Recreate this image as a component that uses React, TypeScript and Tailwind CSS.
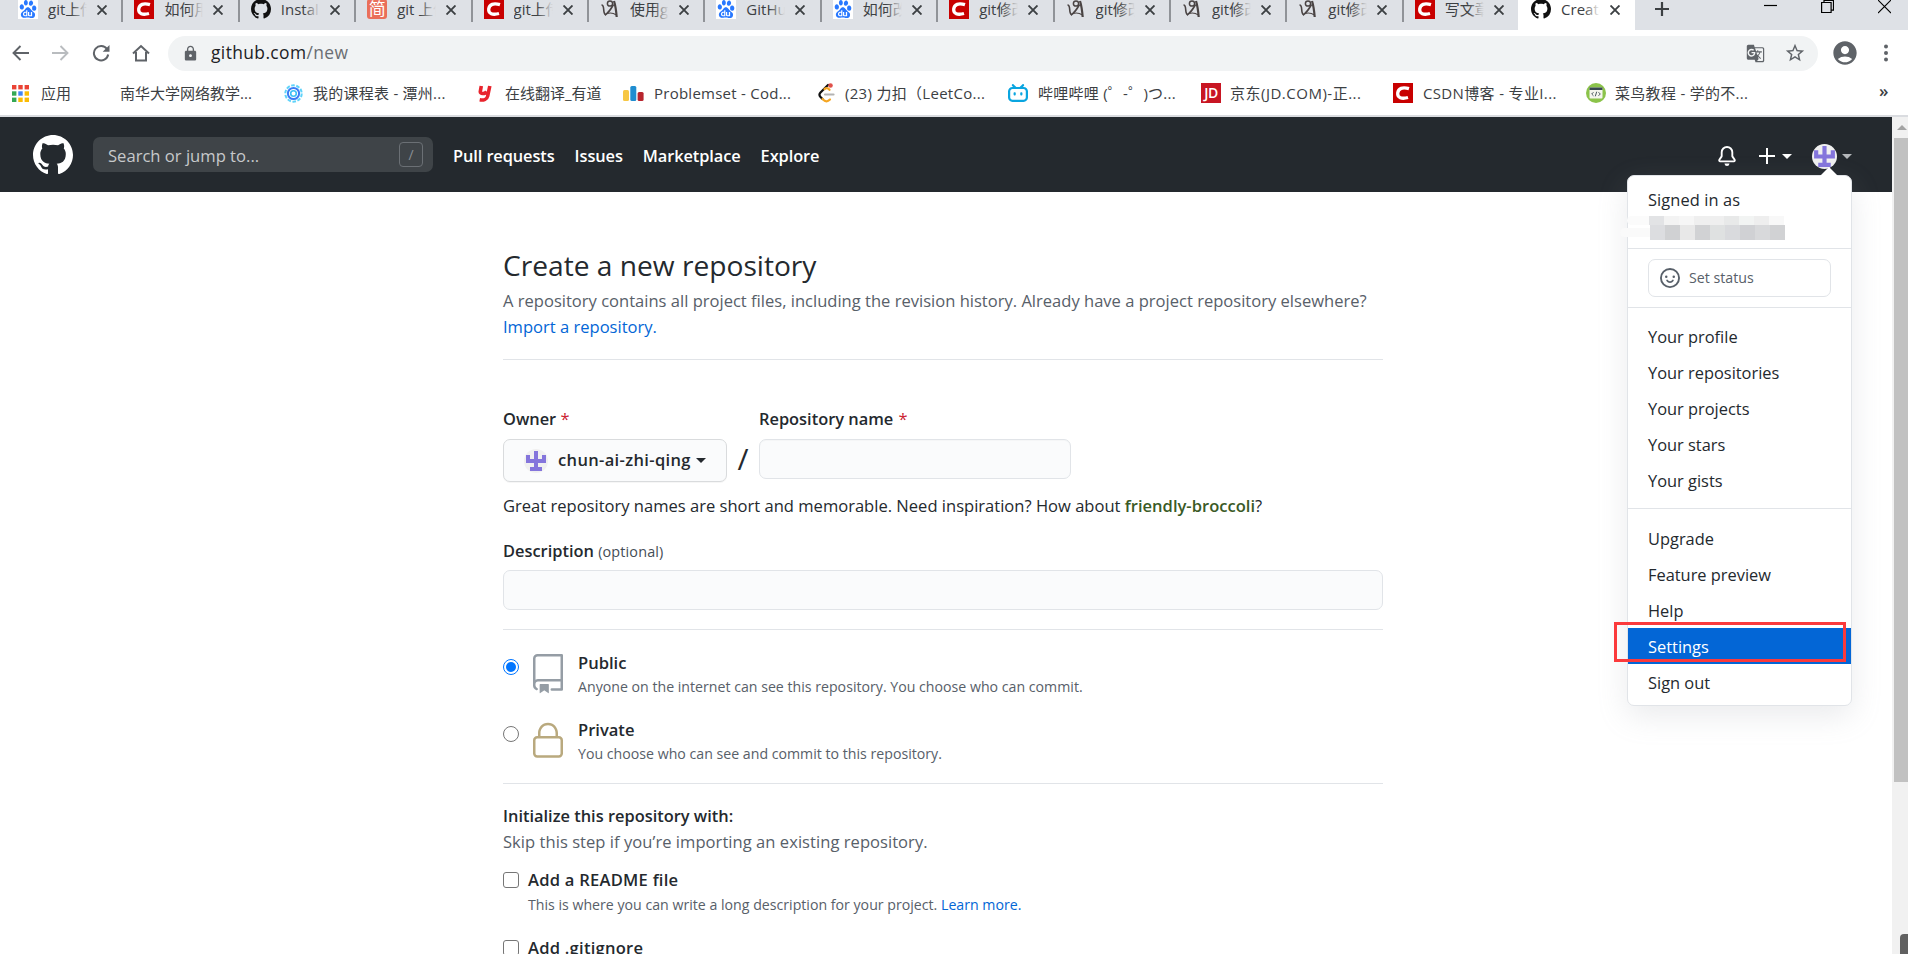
import type { ReactNode } from "react";
import { MdAccountCircle, MdGTranslate, MdLock, MdStarBorder } from "react-icons/md";
import { SiBaidu, SiBilibili } from "react-icons/si";

const MARK =
  "M8 0C3.58 0 0 3.58 0 8c0 3.54 2.29 6.53 5.47 7.59.4.07.55-.17.55-.38 0-.19-.01-.82-.01-1.49-2.01.37-2.53-.49-2.69-.94-.09-.23-.48-.94-.82-1.13-.28-.15-.68-.52-.01-.53.63-.01 1.08.58 1.23.82.72 1.21 1.87.87 2.33.66.07-.52.28-.87.51-1.07-1.78-.2-3.64-.89-3.64-3.95 0-.87.31-1.59.82-2.15-.08-.2-.36-1.02.08-2.12 0 0 .67-.21 2.2.82.64-.18 1.32-.27 2-.27.68 0 1.36.09 2 .27 1.53-1.04 2.2-.82 2.2-.82.44 1.1.16 1.92.08 2.12.51.56.82 1.27.82 2.15 0 3.07-1.87 3.75-3.65 3.95.29.25.54.73.54 1.48 0 1.07-.01 1.93-.01 2.2 0 .21.15.46.55.38A8.013 8.013 0 0016 8c0-4.42-3.58-8-8-8z";

function GithubMark({ className }: { className: string }) {
  return (
    <svg viewBox="0 0 16 16" className={className} fill="currentColor">
      <path fillRule="evenodd" d={MARK} />
    </svg>
  );
}

function Identicon({ className }: { className: string }) {
  return (
    <svg viewBox="0 0 12 12" className={className}>
      <circle cx="6" cy="6" r="6" fill="#f0f0f0" />
      <path d="M5 1h2v4h2V3h2v4H7v2h2v2H3V9h2V7H1V3h2v2h2z" fill="#8475dc" />
    </svg>
  );
}

function Caret({ className }: { className: string }) {
  return (
    <svg viewBox="0 0 10 5" className={className} fill="currentColor">
      <path d="M0 0h10L5 5z" />
    </svg>
  );
}

function BaiduIcon() {
  return (
    <span className="flex size-5 items-center justify-center bg-white">
      <SiBaidu className="size-[18px] text-[#2878ff]" />
    </span>
  );
}

function CsdnIcon() {
  return (
    <svg viewBox="0 0 20 20" className="size-5">
      <rect width="20" height="20" fill="#c80000" />
      <path d="M16 5.7C9.500 3.700 5.300 5.300 4.700 10c-.4 4.700 3.800 6.300 10.300 4.500" fill="none" stroke="#fff" strokeWidth="3.300" />
    </svg>
  );
}

function JianIcon() {
  return (
    <span className="flex size-5 items-center justify-center rounded-[3px] bg-[#ea6f5a] text-[17px] leading-5 text-white">简</span>
  );
}

function SketchIcon() {
  return (
    <svg viewBox="0 0 20 20" className="size-5" fill="none" stroke="#4a4444">
      <circle cx="10" cy="4.500" r="2.600" strokeWidth="1.500" />
      <path d="M1.500 6c1.500 0 2 1 2.200 4.500.2 3.500.8 5 2.300 5.500" strokeWidth="1.600" />
      <path d="M5 16c3-2 5.500-5 8.500-10.500" strokeWidth="1.600" />
      <path d="M14 2c1 3 2 8 2.700 16" strokeWidth="2.200" />
      <path d="M7 14.500c3-1 6-.8 9.500 1.500" strokeWidth="1.100" />
    </svg>
  );
}

function Favicon({ kind }: { kind: string }) {
  if (kind === "baidu") return <BaiduIcon />;
  if (kind === "csdn") return <CsdnIcon />;
  if (kind === "jian") return <JianIcon />;
  if (kind === "sketch") return <SketchIcon />;
  return <GithubMark className="size-5 text-[#111]" />;
}

const TABS = [
  { icon: "baidu", title: "git上传" },
  { icon: "csdn", title: "如何用" },
  { icon: "github", title: "Install" },
  { icon: "jian", title: "git 上传" },
  { icon: "csdn", title: "git上传" },
  { icon: "sketch", title: "使用gi" },
  { icon: "baidu", title: "GitHub" },
  { icon: "baidu", title: "如何改" },
  { icon: "csdn", title: "git修改" },
  { icon: "sketch", title: "git修改" },
  { icon: "sketch", title: "git修改" },
  { icon: "sketch", title: "git修改" },
  { icon: "csdn", title: "写文章" },
];

function TabBody({ icon, title, fade }: { icon: string; title: string; fade: string }) {
  return (
    <>
      <span className="-mt-[3px] flex size-5 shrink-0">
        <Favicon kind={icon} />
      </span>
      <span className="relative ml-[10px] h-[22px] w-[39px] shrink-0 overflow-hidden whitespace-nowrap text-[15px] leading-[21px]">
        {title}
        <span className={"absolute inset-y-0 right-0 w-4 bg-gradient-to-r from-transparent " + fade} />
      </span>
      <svg viewBox="0 0 10 10" className="ml-[10px] size-[10px] shrink-0" stroke="#3c4043" strokeWidth="1.900">
        <path d="M.5.5l9 9M9.500.5l-9 9" />
      </svg>
    </>
  );
}

function TabStrip() {
  return (
    <div className="flex h-[30px] shrink-0 bg-[#dee1e6] pl-[7px] text-[#3c4043]">
      {TABS.map((tab, i) => (
        <div
          key={i}
          className={
            "flex h-[22px] w-[116.400px] shrink-0 items-center border-r-2 pb-[2px] pl-[11px] " +
            (i === TABS.length - 1 ? "border-transparent" : "border-[#909398]")
          }
        >
          <TabBody icon={tab.icon} title={tab.title} fade="to-[#dee1e6]" />
        </div>
      ))}
      <div className="relative -ml-[2px] flex h-[30px] w-[117px] shrink-0 bg-white">
        <div className="flex h-[22px] items-center pb-[2px] pl-[13px]">
          <TabBody icon="github" title="Create a" fade="to-white" />
        </div>
        <span className="absolute right-full top-0 h-[30px] w-[7px] rounded-br-[8px] bg-[#dee1e6]" />
      </div>
      <div className="-ml-px flex h-[30px] flex-1 rounded-bl-[8px] bg-[#dee1e6]">
        <svg viewBox="0 0 14 14" className="ml-[21px] mt-[2px] size-[14px]" stroke="#3c4043" strokeWidth="2.200">
          <path d="M7 0v14M0 7h14" />
        </svg>
        <div className="ml-auto mr-[17px] flex">
          <svg viewBox="0 0 13 14" className="h-[14px] w-[13px]" stroke="#000" strokeWidth="1.200">
            <path d="M0 5.500h13" />
          </svg>
          <svg viewBox="0 0 13 14" className="ml-[44px] h-[14px] w-[13px]" fill="none" stroke="#000" strokeWidth="1.200">
            <path d="M.6 2.500h9.500v10H.6zM3 2.500v-2h9.500v9.700h-2.400" />
          </svg>
          <svg viewBox="0 0 13 14" className="ml-[44px] h-[14px] w-[13px]" stroke="#000" strokeWidth="1.100">
            <path d="M0 0l13 13M13 0L0 13" />
          </svg>
        </div>
      </div>
    </div>
  );
}

function Toolbar() {
  return (
    <div className="flex h-[46px] shrink-0 items-center bg-white pl-[12px]">
      <svg viewBox="0 0 17 16" className="h-4 w-[17px]" fill="none" stroke="#5f6368" strokeWidth="1.900">
        <path d="M17 8H1.500M8.500 1l-7 7 7 7" />
      </svg>
      <svg viewBox="0 0 17 16" className="ml-[23px] h-4 w-[17px]" fill="none" stroke="#b9bcbf" strokeWidth="1.900">
        <path d="M0 8h15.500M8.500 1l7 7-7 7" />
      </svg>
      <svg viewBox="0 0 18 18" className="ml-[23px] size-[18px]" fill="none" stroke="#5f6368" strokeWidth="2">
        <path d="M15 5A7.200 7.200 0 1 0 16.200 10.500" />
        <path d="M17.500 1v6.800h-6.800z" fill="#5f6368" stroke="none" />
      </svg>
      <svg viewBox="0 0 18 18" className="ml-[22px] size-[18px]" fill="none" stroke="#5f6368" strokeWidth="2">
        <path d="M1 9.500L9 2l8 7.500M4 8v8.500h10V8" />
      </svg>
      <div className="ml-[18px] flex h-[35px] w-[1650px] items-center rounded-full bg-[#f1f3f4] pl-[14px] pr-[12px]">
        <MdLock className="size-[17px] text-[#5f6368]" />
        <span className="-mt-[2px] ml-[12px] text-[17.400px] tracking-[0.400px] text-[#202124]">
          github.com<span className="text-[#6a6e73]">/new</span>
        </span>
        <MdGTranslate className="ml-auto size-[19px] text-[#5f6368]" />
        <MdStarBorder className="ml-[19px] size-[22px] text-[#5f6368]" />
      </div>
      <MdAccountCircle className="ml-[13px] size-[28px] text-[#5f6368]" />
      <svg viewBox="0 0 4 18" className="ml-[25px] h-[18px] w-1" fill="#5f6368">
        <circle cx="2" cy="2.500" r="2" />
        <circle cx="2" cy="9" r="2" />
        <circle cx="2" cy="15.500" r="2" />
      </svg>
    </div>
  );
}

function Bookmark({ className, icon, children }: { className: string; icon?: ReactNode; children: ReactNode }) {
  return (
    <div className={"flex shrink-0 items-center whitespace-nowrap " + className}>
      {icon}
      {children}
    </div>
  );
}

const APP_DOTS = ["#ea4335", "#ea4335", "#ea4335", "#34a853", "#4285f4", "#fbbc05", "#34a853", "#fbbc05", "#fbbc05"];

function BookmarkBar() {
  return (
    <div className="flex h-[41px] shrink-0 items-center border-b-2 border-[#dadce0] bg-white pb-[5px] pl-[12px] text-[15px] text-[#3c4043]">
      <Bookmark
        className="w-[108px] gap-[12px]"
        icon={
          <svg viewBox="0 0 17 17" className="size-[17px]">
            {APP_DOTS.map((c, i) => (
              <rect key={i} x={(i % 3) * 6.300} y={Math.floor(i / 3) * 6.300} width="4.400" height="4.400" fill={c} />
            ))}
          </svg>
        }
      >
        应用
      </Bookmark>
      <Bookmark className="w-[164px]">南华大学网络教学...</Bookmark>
      <Bookmark
        className="w-[194px] gap-[10px]"
        icon={
          <svg viewBox="0 0 19 19" className="size-[19px]" fill="none">
            <circle cx="9.500" cy="9.500" r="8.200" stroke="#5fd3fa" strokeWidth="2" strokeDasharray="3.600 1.550" />
            <circle cx="9.500" cy="9.500" r="5.600" stroke="#3b7cf5" strokeWidth="2" />
            <circle cx="9.500" cy="9.500" r="2.800" stroke="#3bc0f5" strokeWidth="1.600" />
          </svg>
        }
      >
        <span className="tracking-[0.250px]">我的课程表 - 潭州...</span>
      </Bookmark>
      <Bookmark
        className="w-[145px] gap-[13px]"
        icon={
          <svg viewBox="0 0 14 17" className="h-[17px] w-[14px]" fill="none" stroke="#e8232c" strokeWidth="3.600">
            <path d="M3.300 1L2.300 6.500c-.4 2.500 4.500 3 6.300 0M11.800 1L9.700 11c-.6 3-4 4.500-8 3.800" />
          </svg>
        }
      >
        在线翻译_有道
      </Bookmark>
      <Bookmark
        className="w-[195px] gap-[10px]"
        icon={
          <svg viewBox="0 0 21 17" className="h-[17px] w-[21px]">
            <rect x="0" y="5" width="6" height="11" rx="1.500" fill="#f7c744" />
            <rect x="7.300" y="1" width="6" height="15" rx="1.500" fill="#1f8dd0" />
            <rect x="14.600" y="7" width="6" height="9" rx="1.500" fill="#b8252e" />
          </svg>
        }
      >
        <span className="text-[15px] tracking-[0.250px]">Problemset - Cod...</span>
      </Bookmark>
      <Bookmark
        className="w-[190px] gap-[10px]"
        icon={
          <svg viewBox="0 0 17 20" className="h-5 w-[17px]" fill="none" strokeLinecap="round">
            <path d="M10 2L2.500 9.500c-1.500 1.700-1 3.500 0 4.500l2 2" stroke="#111" strokeWidth="2.200" />
            <path d="M4.500 16c3 3 5 3 7.500.5M6.500 6c2-1.500 3.500-1 5 .8" stroke="#f5a623" strokeWidth="2.200" />
            <path d="M7 11.500h8.500" stroke="#b3b3b3" strokeWidth="2.200" />
            <circle cx="12.500" cy="2.500" r="2.300" fill="#e0514a" />
          </svg>
        }
      >
        <span className="tracking-[0.300px]">(23) 力扣（LeetCo...</span>
      </Bookmark>
      <Bookmark className="w-[193px] gap-[10px]" icon={<SiBilibili className="size-[20px] text-[#0aa5e0]" />}>
        <span className="tracking-[0.250px]">哔哩哔哩 (゜-゜)つ...</span>
      </Bookmark>
      <Bookmark
        className="w-[192px] gap-[9px]"
        icon={
          <span className="flex size-5 items-center justify-center bg-[#c81623] text-[14px] font-semibold leading-none tracking-[-0.5px] text-white">JD</span>
        }
      >
        <span className="tracking-[0.500px]">京东(JD.COM)-正...</span>
      </Bookmark>
      <Bookmark className="w-[193px] gap-[10px]" icon={<CsdnIcon />}>
        <span className="tracking-[0.350px]">CSDN博客 - 专业I...</span>
      </Bookmark>
      <Bookmark
        className="w-[293px] gap-[9px]"
        icon={
          <svg viewBox="0 0 20 20" className="size-5">
            <circle cx="10" cy="10" r="10" fill="#8bc34a" />
            <rect x="3.500" y="4.500" width="13" height="11" rx="1" fill="#f4f6ee" />
            <rect x="3.500" y="4.500" width="13" height="2.500" fill="#37474f" />
            <path d="M7.500 9.200L5.700 11l1.800 1.800M12.500 9.200l1.800 1.800-1.800 1.800M10.700 8.700l-1.400 4.600" fill="none" stroke="#37474f" strokeWidth=".9" />
          </svg>
        }
      >
        <span className="tracking-[0.300px]">菜鸟教程 - 学的不...</span>
      </Bookmark>
      <span className="pb-1 text-[17px] font-semibold">»</span>
    </div>
  );
}

function SiteHeader() {
  return (
    <header className="flex h-[75px] shrink-0 items-center bg-[#24292e] pl-[33px] pr-[40px] text-white">
      <GithubMark className="size-10" />
      <div className="ml-[20px] flex h-[35px] w-[340px] items-center justify-between rounded-[7px] bg-[#3f4448] pl-[15px] pr-[10px] text-[16.600px] text-[#c7c9cb]">
        <span className="mt-[3px]">Search or jump to...</span>
        <span className="flex h-[25px] w-6 items-center justify-center rounded-[4px] border border-[#6b7075] text-[14px] text-[#8a8f94]">/</span>
      </div>
      <nav className="ml-[20px] mt-[3px] flex gap-5 whitespace-nowrap text-[16.400px] font-semibold tracking-[-0.100px]">
        <a>Pull requests</a>
        <a>Issues</a>
        <a>Marketplace</a>
        <a>Explore</a>
      </nav>
      <svg viewBox="0 0 16 16" className="ml-auto mt-[2px] size-5" fill="currentColor">
        <path d="M8 16a2 2 0 001.985-1.750c.017-.137-.097-.25-.235-.25h-3.500c-.138 0-.252.113-.235.25A2 2 0 008 16z" />
        <path
          fillRule="evenodd"
          d="M8 1.500A3.500 3.500 0 004.500 5v2.947c0 .346-.102.683-.294.97l-1.703 2.556a.018.018 0 00-.003.01l.001.006c0 .002.002.004.004.006a.017.017 0 00.006.004l.007.001h10.964l.007-.001a.016.016 0 00.006-.004.016.016 0 00.004-.006l.001-.007a.017.017 0 00-.003-.01l-1.703-2.554a1.750 1.750 0 01-.294-.97V5A3.500 3.500 0 008 1.500zM3 5a5 5 0 0110 0v2.947c0 .05.015.098.042.139l1.703 2.555A1.518 1.518 0 0113.482 13H2.518a1.518 1.518 0 01-1.263-2.360l1.703-2.554A.25.25 0 003 7.947V5z"
        />
      </svg>
      <svg viewBox="0 0 16 16" className="ml-[22px] mt-[3px] size-4" stroke="currentColor" strokeWidth="2">
        <path d="M8 0v16M0 8h16" />
      </svg>
      <Caret className="ml-[7px] mt-[4px] h-[5px] w-[10px]" />
      <Identicon className="ml-[20px] mt-[3px] size-[25px]" />
      <Caret className="ml-[5px] mt-[3px] h-[5px] w-[10px] text-[#b4b7ba]" />
    </header>
  );
}

function Divider() {
  return <div className="h-px shrink-0 bg-[#e1e4e8]" />;
}

function MenuItem({ label, active }: { label: string; active?: boolean }) {
  return (
    <li className={"h-9 pl-5 " + (active ? "bg-[#0366d6] text-white" : "text-[#24292e]")}>{label}</li>
  );
}

const MOSAIC_TOP = ["bg-[#e2e3e5]", "bg-[#f3f3f3]", "bg-[#f6f6f6]", "bg-[#efefef]", "bg-[#efefef]", "bg-[#e8e9e9]", "bg-[#f2f4f3]", "bg-[#eeeeee]", "bg-[#f8f8f8]"];
const MOSAIC_BOTTOM = ["bg-[#dcdde0]", "bg-[#d0d1d3]", "bg-[#e8e8e8]", "bg-[#d1d2d4]", "bg-[#dfe1e1]", "bg-[#d9dadd]", "bg-[#d0d1d4]", "bg-[#d8d9db]", "bg-[#d1d2d4]"];

function UserMenu() {
  return (
    <div className="absolute left-[1627px] top-[175px] w-[225px] rounded-[7px] border border-[#e1e4e8] bg-white text-[16.400px] text-[#24292e] shadow-[0_10px_30px_rgba(149,157,165,0.2)]">
      <svg viewBox="0 0 18 9" className="absolute -top-[9px] right-[13px] h-[9px] w-[18px]">
        <path d="M0 9l9-9 9 9z" fill="#fff" />
      </svg>
      <div className="h-[72px] pl-[21px] pt-[11px]">
        <div className="-ml-px leading-[25px] tracking-[0.100px]">Signed in as</div>
        <div className="relative mt-[4px] flex">
          <span className="absolute -left-[22px] top-0 h-[9px] w-[22px] rounded-l-full bg-[#fbfbfb]" />
          {MOSAIC_TOP.map((c, i) => (
            <span key={i} className={"h-[9px] w-[15px] " + c} />
          ))}
        </div>
        <div className="relative ml-[1px] flex">
          <span className="absolute -left-[30px] top-[3px] h-[9px] w-[30px] rounded-l-full bg-[#fafafa]" />
          {MOSAIC_BOTTOM.map((c, i) => (
            <span key={i} className={"h-[15px] w-[15px] " + c} />
          ))}
        </div>
      </div>
      <Divider />
      <div className="flex h-[58px] items-center px-5">
        <div className="flex h-[38px] w-[183px] items-center rounded-[7px] border border-[#e1e4e8] pl-[11px] text-[14.200px] text-[#586069]">
          <svg viewBox="0 0 16 16" className="mr-[9px] size-5" fill="currentColor">
            <path
              fillRule="evenodd"
              d="M1.500 8a6.500 6.500 0 1113 0 6.500 6.500 0 01-13 0zM8 0a8 8 0 100 16A8 8 0 008 0zM5 8a1 1 0 100-2 1 1 0 000 2zm7-1a1 1 0 11-2 0 1 1 0 012 0z"
            />
            <path d="M5.700 10c1.200 1.650 3.400 1.650 4.600 0" fill="none" stroke="currentColor" strokeWidth="1.400" strokeLinecap="round" />
          </svg>
          Set status
        </div>
      </div>
      <Divider />
      <ul className="pb-[9px] pt-[11px] leading-[36px]">
        <MenuItem label="Your profile" />
        <MenuItem label="Your repositories" />
        <MenuItem label="Your projects" />
        <MenuItem label="Your stars" />
        <MenuItem label="Your gists" />
      </ul>
      <Divider />
      <ul className="pb-[5px] pt-[11px] leading-[37px]">
        <MenuItem label="Upgrade" />
        <MenuItem label="Feature preview" />
        <MenuItem label="Help" />
        <MenuItem label="Settings" active />
        <MenuItem label="Sign out" />
      </ul>
    </div>
  );
}

function RepoIcon() {
  return (
    <svg viewBox="0 0 24 24" className="size-10" fill="#959da5">
      <path
        fillRule="evenodd"
        d="M3 2.750A2.750 2.750 0 015.750 0h14.500a.75.75 0 01.75.75v20.500a.75.75 0 01-.75.75h-6a.75.75 0 010-1.500h5.250v-4H6A1.500 1.500 0 004.500 18v.75c0 .716.43 1.334 1.050 1.605a.75.75 0 01-.6 1.374A3.250 3.250 0 013 18.750v-16zM19.500 1.500V15H6c-.546 0-1.059.146-1.500.401V2.750c0-.69.56-1.250 1.250-1.250H19.500z"
      />
      <path d="M7 18.250a.25.25 0 01.25-.25h5a.25.25 0 01.25.25v5.010a.25.25 0 01-.397.201l-2.206-1.604a.25.25 0 00-.294 0L7.397 23.460a.25.25 0 01-.397-.2v-5.010z" />
    </svg>
  );
}

function LockIcon() {
  return (
    <svg viewBox="0 0 24 24" className="size-10" fill="#b9a97e">
      <path
        fillRule="evenodd"
        d="M6 9V7.250C6 3.845 8.503 1 12 1s6 2.845 6 6.250V9h.5a2.500 2.500 0 012.500 2.500v8a2.500 2.500 0 01-2.500 2.500h-13A2.500 2.500 0 013 19.500v-8A2.500 2.500 0 015.500 9H6zm1.500-1.750C7.500 4.580 9.422 2.500 12 2.500c2.578 0 4.500 2.080 4.500 4.750V9h-9V7.250zm-3 4.250a1 1 0 011-1h13a1 1 0 011 1v8a1 1 0 01-1 1h-13a1 1 0 01-1-1v-8z"
      />
    </svg>
  );
}

function Visibility({ checked, icon, title, text }: { checked: boolean; icon: ReactNode; title: string; text: string }) {
  return (
    <div className="flex h-[67px]">
      <span
        className={
          "mt-[9px] flex size-4 shrink-0 items-center justify-center rounded-full border bg-white " +
          (checked ? "border-[#0075ff]" : "border-[#767676]")
        }
      >
        {checked && <span className="size-[10px] rounded-full bg-[#0075ff]" />}
      </span>
      <span className="ml-[9px] mt-[4px] shrink-0">{icon}</span>
      <div className="ml-[10px]">
        <div className="font-semibold leading-[26px]">{title}</div>
        <div className="text-[14.170px] leading-[22px] text-[#586069]">{text}</div>
      </div>
    </div>
  );
}

function Checkbox() {
  return <span className="mt-[5px] size-4 shrink-0 rounded-[3px] border border-[#767676] bg-white" />;
}

function NewRepository() {
  return (
    <main className="ml-[503px] w-[880px] whitespace-nowrap pt-[52px] text-[16.560px] text-[#24292e]">
      <h1 className="text-[28.150px] leading-[42px]">Create a new repository</h1>
      <p className="mt-[2px] leading-[26px] text-[#586069]">
        A repository contains all project files, including the revision history. Already have a project repository elsewhere?
        <br />
        <a className="text-[#0366d6]">Import a repository.</a>
      </p>
      <div className="mt-[19px]">
        <Divider />
      </div>
      <div className="mt-[46px] flex">
        <div className="w-[224px]">
          <div className="text-[16.400px] font-semibold leading-[26px]">
            Owner <span className="font-normal text-[#cb2431]">*</span>
          </div>
          <button className="mt-[7px] flex h-[43px] w-full items-center rounded-[7px] border border-[#d9dbdd] bg-[#fafbfc] pl-[20px] text-[16.500px] font-semibold tracking-[0.350px] shadow-[0_1px_0_rgba(27,31,35,0.04)]">
            <Identicon className="mt-px size-6" />
            <span className="ml-[10px]">chun-ai-zhi-qing</span>
            <Caret className="ml-[5px] h-[5px] w-[10px]" />
          </button>
        </div>
        <div className="w-8 pt-[32px] text-center text-[30px] leading-[42px]">/</div>
        <div className="w-[312px]">
          <div className="text-[16.400px] font-semibold leading-[26px]">
            Repository name <span className="ml-[1px] font-normal text-[#cb2431]">*</span>
          </div>
          <div className="mt-[7px] h-10 rounded-[7px] border border-[#e1e4e8] bg-[#fafbfc] shadow-[inset_0_1px_0_rgba(225,228,232,0.2)]" />
        </div>
      </div>
      <p className="mt-[11px] leading-[26px]">
        Great repository names are short and memorable. Need inspiration? How about{" "}
        <strong className="font-semibold text-[#3a5a26]">friendly-broccoli</strong>?
      </p>
      <div className="mt-[19px] text-[16.400px] font-semibold leading-[26px]">
        Description <span className="text-[14.400px] font-normal tracking-[0.150px] text-[#444d56]">(optional)</span>
      </div>
      <div className="mb-[19px] mt-[5px] h-10 rounded-[7px] border border-[#e1e4e8] bg-[#fafbfc]" />
      <Divider />
      <div className="mt-[20px]">
        <Visibility checked icon={<RepoIcon />} title="Public" text="Anyone on the internet can see this repository. You choose who can commit." />
        <Visibility checked={false} icon={<LockIcon />} title="Private" text="You choose who can see and commit to this repository." />
      </div>
      <div className="-mt-[1px]">
        <Divider />
      </div>
      <div className="mt-[19px] text-[16.400px] font-semibold leading-[26px]">Initialize this repository with:</div>
      <p className="leading-[26px] tracking-[0.040px] text-[#586069]">Skip this step if you’re importing an existing repository.</p>
      <div className="mt-[12px] flex h-[68px] gap-[9px]">
        <Checkbox />
        <div>
          <div className="font-semibold leading-[26px] tracking-[0.250px]">Add a README file</div>
          <div className="mt-px text-[14.170px] leading-[22px] text-[#586069]">
            This is where you can write a long description for your project. <a className="text-[#0366d6]">Learn more.</a>
          </div>
        </div>
      </div>
      <div className="flex gap-[9px]">
        <Checkbox />
        <div className="font-semibold leading-[26px] tracking-[0.250px]">Add .gitignore</div>
      </div>
    </main>
  );
}

function Scrollbar() {
  return (
    <div className="flex w-4 shrink-0 flex-col items-end bg-[#f1f1f1]">
      <div className="flex h-[21px] w-[14px] items-center justify-center">
        <svg viewBox="0 0 10 5" className="ml-[2px] h-[5px] w-[10px]">
          <path d="M0 5l5-5 5 5z" fill="#a3a3a3" />
        </svg>
      </div>
      <div className="h-[644px] w-[14px] bg-[#c1c1c1]" />
      <div className="mt-auto h-[20px] w-2 rounded-tl-[4px] bg-[#606060]" />
    </div>
  );
}

export default function App() {
  return (
    <div className="relative flex h-[954px] w-[1908px] flex-col overflow-hidden bg-white font-['Open_Sans','Noto_Sans_CJK_SC',sans-serif]">
      <TabStrip />
      <Toolbar />
      <BookmarkBar />
      <div className="flex min-h-0 flex-1">
        <div className="flex min-w-0 flex-1 flex-col overflow-hidden">
          <SiteHeader />
          <NewRepository />
        </div>
        <Scrollbar />
      </div>
      <UserMenu />
      <div className="absolute left-[1614px] top-[622px] h-10 w-[232px] border-[3px] border-[#fb3a3c]" />
    </div>
  );
}
